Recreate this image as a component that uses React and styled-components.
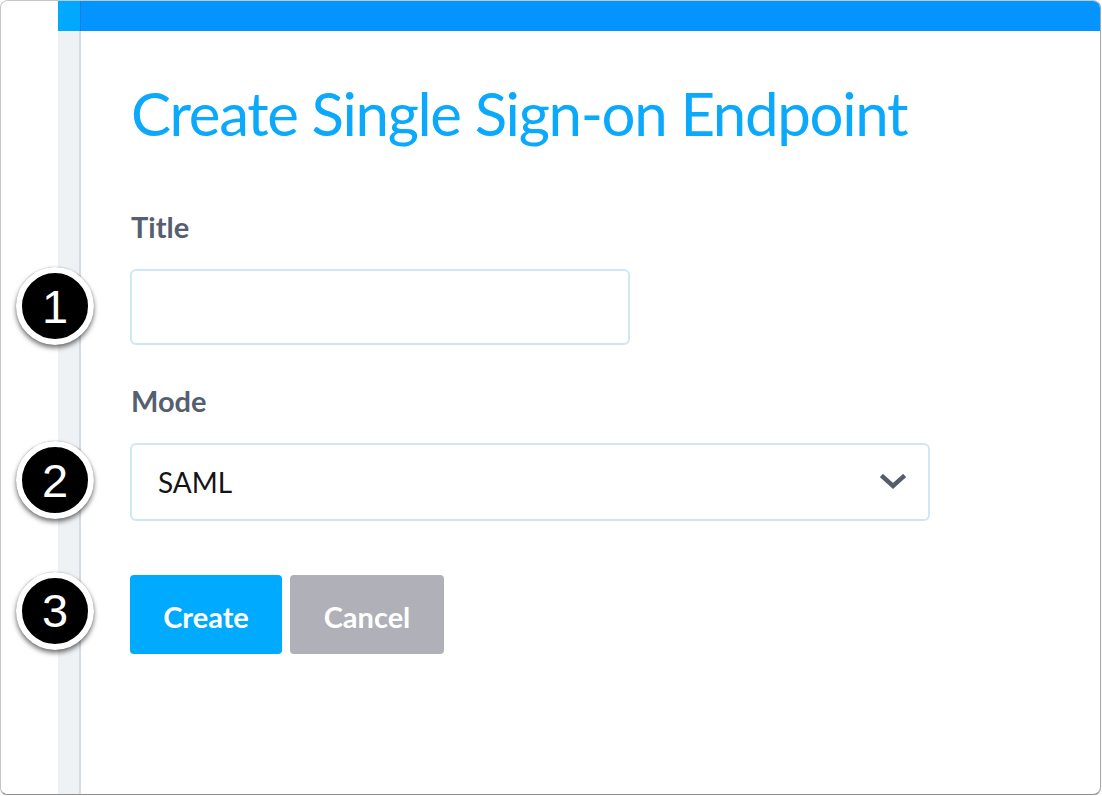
import React from "react";
import styled, { createGlobalStyle } from "styled-components";

const Global = createGlobalStyle`
  html, body { margin: 0; padding: 0; background: #ffffff; }
  body { font-family: "Lato", "Noto Sans", sans-serif; }
  * { box-sizing: border-box; }
`;

const Window = styled.div`
  width: 1101px;
  height: 795px;
  border: 1px solid #c6c6c6;
  border-bottom-color: #8e8e8e;
  border-right-color: #a8a8a8;
  border-radius: 8px;
  box-shadow: 0 1px 1px rgba(0, 0, 0, 0.25);
  overflow: hidden;
  display: flex;
  background: #fff;
`;

const Gutter = styled.div`
  width: 57px;
  flex: none;
  background: #fff;
`;

const AppShell = styled.div`
  flex: 1;
  display: flex;
  flex-direction: column;
`;

const TopBar = styled.div`
  height: 30px;
  flex: none;
  display: flex;
  background: #0494ff;
`;

const BarStub = styled.div`
  width: 23px;
  background: #00a9fe;
  border-right: 1px solid #0b80dc;
`;

const Body = styled.div`
  flex: 1;
  display: flex;
`;

const Sidebar = styled.div`
  width: 23px;
  flex: none;
  background: #eef2f5;
  border-right: 2px solid #d3dce5;
`;

const Main = styled.main`
  flex: 1;
  padding: 46px 0 0 49px;
`;

const Heading = styled.h1`
  margin: 0 0 60px;
  font-family: "Lato", sans-serif;
  font-weight: 400;
  font-size: 60px;
  line-height: 72px;
  color: #0aa9fc;
  letter-spacing: -1.35px;
  padding-left: 1px;
`;

const Field = styled.div`
  margin-bottom: ${(p) => p.$after}px;
`;

const Label = styled.label`
  display: block;
  font-family: "Lato", sans-serif;
  font-weight: 700;
  font-size: 29px;
  line-height: 35px;
  color: #565f6f;
  margin-bottom: 25px;
  padding-left: 1px;
`;

const Anchor = styled.div`
  position: relative;
  width: ${(p) => p.$w}px;
`;

const TextInput = styled.input`
  display: block;
  width: 100%;
  height: 76px;
  border: 2px solid #cfe8f8;
  border-radius: 6px;
  background: #fff;
  outline: none;
  font-family: "Lato", sans-serif;
  font-size: 28px;
`;

const Select = styled.div`
  height: 78px;
  border: 2px solid #cfe8f8;
  border-radius: 6px;
  display: flex;
  align-items: center;
  justify-content: space-between;
  padding: 0 22px 0 26px;
  font-family: "Lato", sans-serif;
  font-size: 28px;
  color: #141414;
`;

const Buttons = styled.div`
  display: flex;
  gap: 8px;
`;

const Button = styled.button`
  width: ${(p) => p.$w}px;
  height: 79px;
  border: none;
  border-radius: 4px;
  background: ${(p) => p.$bg};
  color: #fff;
  font-family: "Lato", sans-serif;
  font-weight: 700;
  font-size: 29px;
  padding: 0;
  padding-top: 4px;
`;

const Badge = styled.div`
  position: absolute;
  left: -114px;
  top: calc(50% + ${(p) => p.$dy}px);
  transform: translateY(-50%);
  width: 78px;
  height: 78px;
  border-radius: 50%;
  background: #000;
  border: 6px solid #fff;
  box-shadow: 0 3px 5px rgba(0, 0, 0, 0.55), 0 0 1px rgba(0, 0, 0, 0.4);
  display: flex;
  align-items: center;
  justify-content: center;
  color: #fff;
  font-family: "Liberation Sans", Arial, sans-serif;
  font-size: 47px;
  line-height: 1;
`;

const Chevron = () => (
  <svg width="26" height="16" viewBox="0 0 26 16">
    <polyline
      points="3,3 13,12 23,3"
      fill="none"
      stroke="#555d6b"
      strokeWidth="4.5"
      strokeLinecap="square"
    />
  </svg>
);

export default function App() {
  return (
    <>
      <Global />
      <Window>
        <Gutter />
        <AppShell>
          <TopBar>
            <BarStub />
          </TopBar>
          <Body>
            <Sidebar />
            <Main>
              <Heading>Create Single Sign-on Endpoint</Heading>
              <Field $after={38}>
                <Label>Title</Label>
                <Anchor $w={500}>
                  <TextInput type="text" />
                  <Badge $dy={-1}>1</Badge>
                </Anchor>
              </Field>
              <Field $after={54}>
                <Label>Mode</Label>
                <Anchor $w={800}>
                  <Select>
                    <span>SAML</span>
                    <Chevron />
                  </Select>
                  <Badge $dy={-2}>2</Badge>
                </Anchor>
              </Field>
              <Anchor $w={314}>
                <Buttons>
                  <Button $w={152} $bg="#00aaff">Create</Button>
                  <Button $w={154} $bg="#afb0b8">Cancel</Button>
                </Buttons>
                <Badge $dy={-4}>3</Badge>
              </Anchor>
            </Main>
          </Body>
        </AppShell>
      </Window>
    </>
  );
}
